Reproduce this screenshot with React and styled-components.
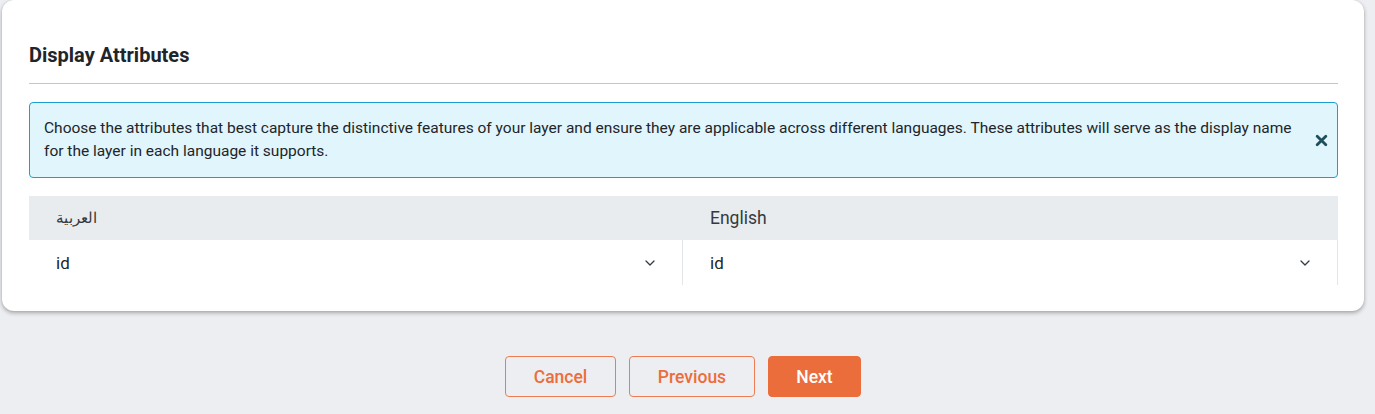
import React from "react";
import styled, { createGlobalStyle } from "styled-components";

const GlobalStyle = createGlobalStyle`
  body {
    margin: 0;
    background: #eceef1;
    font-family: Roboto, "Noto Sans", Arial, sans-serif;
    color: #212529;
  }
`;

const Chevron = () => (
  <svg width="12" height="12" viewBox="0 0 12 12" fill="none">
    <path d="M2 4l4 4 4-4" stroke="#343a40" strokeWidth="1.3" strokeLinecap="round" strokeLinejoin="round" />
  </svg>
);

const CloseIcon = () => (
  <svg width="13" height="13" viewBox="0 0 12 12">
    <path d="M2 2l8 8M10 2l-8 8" stroke="#1f4f5c" strokeWidth="2.6" strokeLinecap="round" />
  </svg>
);

const App = () => {
  const columns = [
    { label: "العربية", value: "id", rtl: true },
    { label: "English", value: "id" },
  ];
  return (
    <Page>
      <GlobalStyle />
      <Card>
        <Title>Display Attributes</Title>
        <Divider />
        <Alert>
          <p>
            Choose the attributes that best capture the distinctive features of your layer and ensure they are
            applicable across different languages. These attributes will serve as the display name for the layer in
            each language it supports.
          </p>
          <CloseButton>
            <CloseIcon />
          </CloseButton>
        </Alert>
        <Table>
          {columns.map((c) => (
            <HeadCell key={c.label} lang={c.rtl ? "ar" : "en"}>
              {c.label}
            </HeadCell>
          ))}
          {columns.map((c, i) => (
            <SelectCell key={i}>
              <span>{c.value}</span>
              <Chevron />
            </SelectCell>
          ))}
        </Table>
      </Card>
      <Actions>
        <Button>Cancel</Button>
        <Button $wide>Previous</Button>
        <Button $primary>Next</Button>
      </Actions>
    </Page>
  );
};

export default App;

const Page = styled.div`
  padding: 0 11px 18px 2px;
`;

const Card = styled.div`
  background: #fff;
  border-radius: 12px;
  box-shadow: 0 2px 4px rgba(0, 0, 0, 0.3), 0 0 2px rgba(0, 0, 0, 0.1);
  padding: 41px 26px 26px 27px;
  height: 311px;
  box-sizing: border-box;
`;

const Title = styled.h2`
  margin: 0;
  font-size: 20px;
  font-weight: 700;
  line-height: 28px;
  color: #212529;
`;

const Divider = styled.div`
  height: 1px;
  background: #c3c7cb;
  margin: 14px 0 18px;
`;

const Alert = styled.div`
  display: flex;
  align-items: center;
  background: #e1f5fc;
  border: 1px solid #1c9ed3;
  border-radius: 4px;
  padding: 14px 9px 14px 14px;
  p {
    margin: 0;
    flex: 1;
    font-size: 15.5px;
    line-height: 23px;
    color: #212529;
  }
`;

const CloseButton = styled.div`
  display: flex;
  padding: 0 0 0 8px;
`;

const Table = styled.div`
  display: grid;
  grid-template-columns: 654px 1fr;
  margin-top: 18px;
`;

const HeadCell = styled.div`
  background: #e9ecef;
  height: 44px;
  display: flex;
  align-items: center;
  padding-left: 27px;
  font-size: ${(p) => (p.lang === "ar" ? "14.5px" : "17.5px")};
  color: #343a40;
`;

const SelectCell = styled.div`
  height: 45px;
  display: flex;
  align-items: center;
  justify-content: space-between;
  padding: 0 26px 0 27px;
  font-size: 17px;
  color: #212529;
  border-right: 1px solid #e3e6e9;
`;

const Actions = styled.div`
  display: flex;
  justify-content: center;
  gap: 13px;
  margin-top: 45px;
`;

const Button = styled.button`
  height: 41px;
  min-width: ${(p) => (p.$wide ? "126px" : p.$primary ? "93px" : "111px")};
  border-radius: 4px;
  border: 1px solid ${(p) => (p.$primary ? "#ec6d3c" : "#ee7c52")};
  background: ${(p) => (p.$primary ? "#ec6d3c" : "transparent")};
  color: ${(p) => (p.$primary ? "#fff" : "#ec6d3c")};
  font-family: Roboto, Arial, sans-serif;
  font-size: 17.5px;
  font-weight: 500;
  cursor: pointer;
`;
